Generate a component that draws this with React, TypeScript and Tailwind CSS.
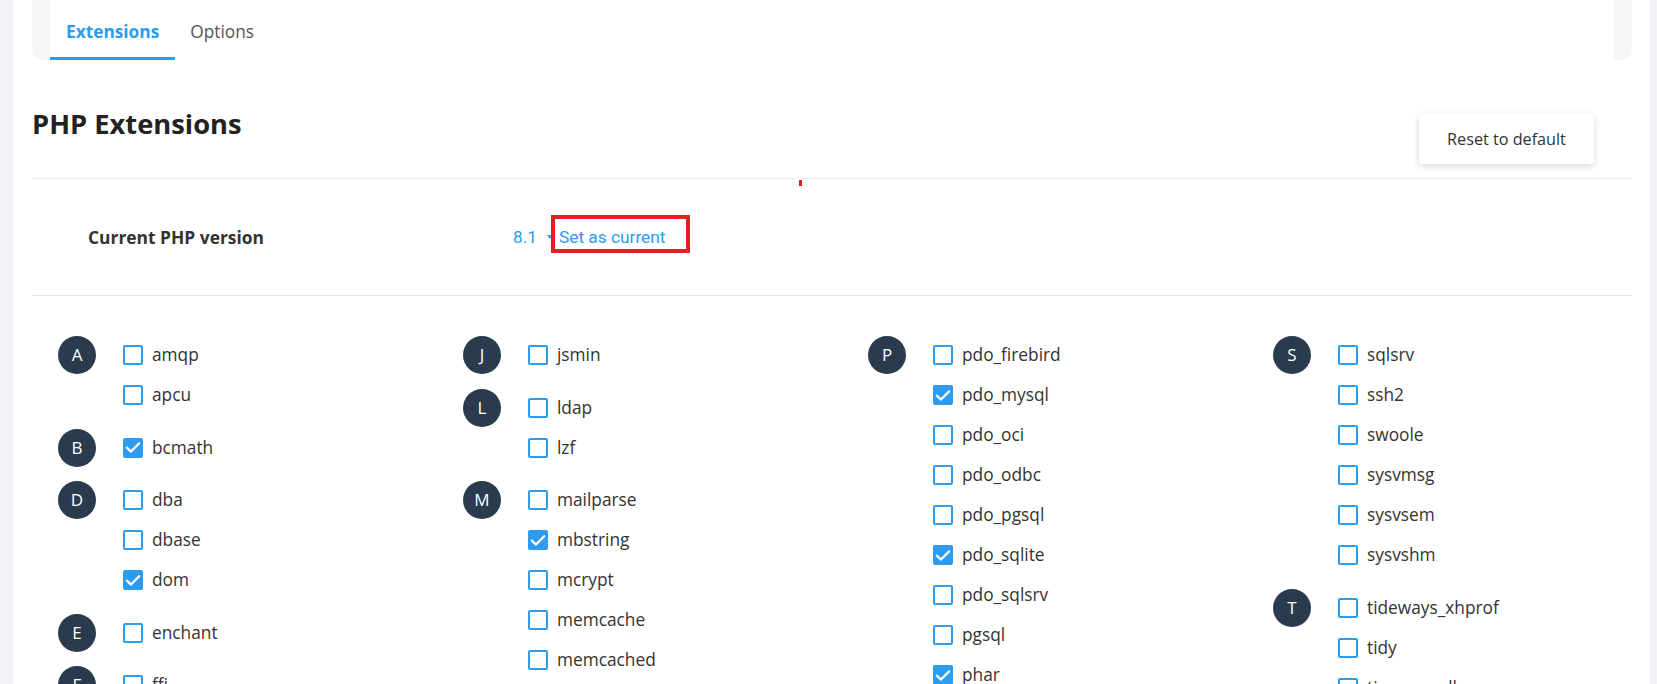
import React from "react";

type Ext = { name: string; on?: boolean };
type Group = { letter: string; items: Ext[] };

const columns: Group[][] = [
  [
    { letter: "A", items: [{ name: "amqp" }, { name: "apcu" }] },
    { letter: "B", items: [{ name: "bcmath", on: true }] },
    { letter: "D", items: [{ name: "dba" }, { name: "dbase" }, { name: "dom", on: true }] },
    { letter: "E", items: [{ name: "enchant" }] },
    { letter: "F", items: [{ name: "ffi" }, { name: "fileinfo", on: true }] },
  ],
  [
    { letter: "J", items: [{ name: "jsmin" }] },
    { letter: "L", items: [{ name: "ldap" }, { name: "lzf" }] },
    {
      letter: "M",
      items: [
        { name: "mailparse" },
        { name: "mbstring", on: true },
        { name: "mcrypt" },
        { name: "memcache" },
        { name: "memcached" },
        { name: "mongodb" },
      ],
    },
  ],
  [
    {
      letter: "P",
      items: [
        { name: "pdo_firebird" },
        { name: "pdo_mysql", on: true },
        { name: "pdo_oci" },
        { name: "pdo_odbc" },
        { name: "pdo_pgsql" },
        { name: "pdo_sqlite", on: true },
        { name: "pdo_sqlsrv" },
        { name: "pgsql" },
        { name: "phar", on: true },
      ],
    },
  ],
  [
    {
      letter: "S",
      items: [
        { name: "sqlsrv" },
        { name: "ssh2" },
        { name: "swoole" },
        { name: "sysvmsg" },
        { name: "sysvsem" },
        { name: "sysvshm" },
      ],
    },
    { letter: "T", items: [{ name: "tideways_xhprof" }, { name: "tidy" }, { name: "timezonedb" }] },
  ],
];

function Box({ on }: { on?: boolean }) {
  if (on) {
    return (
      <span className="flex h-[20px] w-[20px] shrink-0 items-center justify-center rounded-[2px] bg-[#2d9bf0]">
        <svg width="16" height="13" viewBox="0 0 16 13" fill="none">
          <path d="M1.8 6.6 L6 10.6 L14.2 2.2" stroke="#fff" strokeWidth="2.2" strokeLinecap="round" strokeLinejoin="round" />
        </svg>
      </span>
    );
  }
  return <span className="h-[20px] w-[20px] shrink-0 rounded-[2px] border-2 border-[#2d9bf0] bg-white" />;
}

function GroupView({ g }: { g: Group }) {
  return (
    <div className="mb-[12.5px] flex">
      <div className="flex h-[40px] w-[38px] shrink-0 items-center">
        <span className="flex h-[38px] w-[38px] items-center justify-center rounded-full bg-[#2a3b4d] text-[17px] text-white">
          {g.letter}
        </span>
      </div>
      <div className="ml-[27px] flex flex-col">
        {g.items.map((it) => (
          <label key={it.name} className="flex h-[40px] items-center gap-[9px] text-[17.3px] text-[#333]">
            <Box on={it.on} />
            <span>{it.name}</span>
          </label>
        ))}
      </div>
    </div>
  );
}

export default function App() {
  return (
    <div
      className="relative flex h-[684px] w-full overflow-hidden bg-[#f1f2f6]"
      style={{ fontFamily: "'Open Sans', 'Noto Sans', sans-serif" }}
    >
      <div className="ml-[13px] w-[1637px] shrink-0 overflow-hidden bg-white pl-[19px] pr-[18px]">
        {/* Tabs card */}
        <div className="h-[60px] rounded-b-[10px] bg-[#f5f6f8] px-[18px]">
          <div className="flex h-[60px] bg-white">
            <div className="flex h-[60px] items-center border-b-[3px] border-[#2d9bf0] px-[16px] pt-[6px] text-[17.3px] font-bold text-[#2d9bf0]">
              Extensions
            </div>
            <div className="flex h-[60px] items-center px-[15px] pb-[3px] pt-[6px] text-[17.3px] text-[#555]">
              Options
            </div>
          </div>
        </div>

        {/* Header */}
        <div className="flex h-[119px] items-start justify-between border-b border-[#e9eaee]">
          <h1 className="pt-[45px] text-[27.3px] font-bold leading-[38px] text-[#222]">PHP Extensions</h1>
          <button className="mr-[38px] mt-[54px] h-[50px] w-[175px] rounded-[3px] bg-white text-[16.2px] text-[#333] shadow-[0_2px_7px_rgba(0,0,0,0.16)]">
            Reset to default
          </button>
        </div>

        {/* Version row */}
        <div className="flex h-[117px] items-center border-b border-[#e9eaee] pl-[56px]">
          <div className="w-[425px] text-[17.4px] font-bold text-[#333]">Current PHP version</div>
          <div
            className="flex items-center text-[17.3px] leading-[20px] text-[#2d9bf0]"
            style={{ fontFamily: "Roboto, 'Liberation Sans', sans-serif" }}
          >
            <span>8.1</span>
            <svg className="ml-[10px] mr-[6px]" width="6" height="4" viewBox="0 0 6 4">
              <path d="M0 0 L6 0 L3 4 Z" fill="#2d9bf0" />
            </svg>
            <span className="relative">
              Set as current
              <span className="absolute -bottom-[6px] -left-[8px] -right-[25px] -top-[12px] border-4 border-[#ec1c24]" />
            </span>
          </div>
        </div>

        {/* Extensions grid */}
        <div className="grid grid-cols-[repeat(4,405px)] pl-[26px] pt-[39px]">
          {columns.map((col, i) => (
            <div key={i} className="flex flex-col">
              {col.map((g) => (
                <GroupView key={g.letter} g={g} />
              ))}
            </div>
          ))}
        </div>
      </div>
      <div className="absolute left-[799px] top-[180px] h-[6px] w-[3px] bg-[#ec1c24]" />
    </div>
  );
}
